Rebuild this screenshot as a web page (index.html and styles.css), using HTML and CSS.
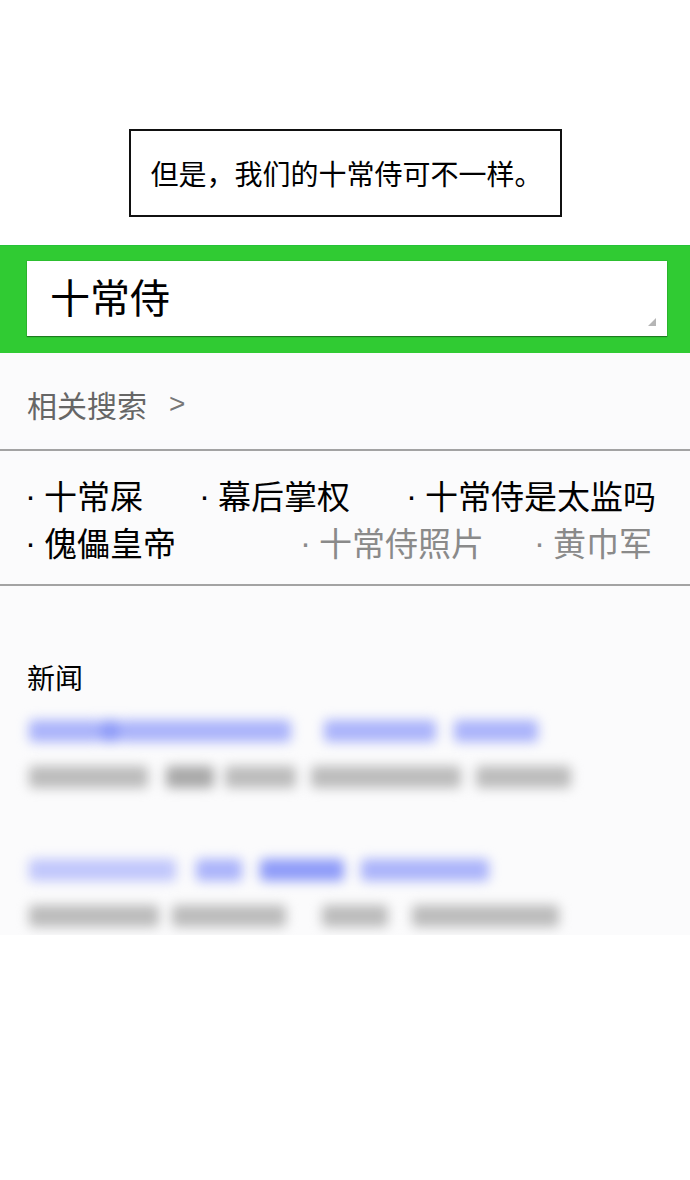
FILE: index.html
```html
<!DOCTYPE html>
<html lang="zh-CN">
<head>
<meta charset="utf-8">
<title>十常侍</title>
<link rel="stylesheet" href="styles.css">
</head>
<body>
<div class="page">
  <header class="top">
    <div class="caption">但是，我们的十常侍可不一样。</div>
  </header>

  <section class="search-bar">
    <div class="search-input">
      <span class="query">十常侍</span>
      <svg class="resize" width="8" height="8" viewBox="0 0 8 8"><path d="M8 0 L8 8 L0 8 Z" fill="#b5b5b5"/></svg>
    </div>
  </section>

  <main class="results">
    <div class="related-head">相关搜索<span class="chevron">&gt;</span></div>

    <div class="related-links">
      <div class="link-row row-one">
        <span class="link"><span class="dot">·</span>十常屎</span>
        <span class="link"><span class="dot">·</span>幕后掌权</span>
        <span class="link"><span class="dot">·</span>十常侍是太监吗</span>
      </div>
      <div class="link-row row-two">
        <span class="link first-wide"><span class="dot">·</span>傀儡皇帝</span>
        <span class="link visited"><span class="dot">·</span>十常侍照片</span>
        <span class="link visited"><span class="dot">·</span>黄巾军</span>
      </div>
    </div>

    <div class="news">
      <div class="news-title">新闻</div>
      <div class="blur-line blue first">
        <span class="seg" style="width:72px"></span><span class="seg dark" style="width:18px"></span><span class="seg" style="width:172px"></span><span class="seg" style="width:112px;margin-left:33px"></span><span class="seg" style="width:84px;margin-left:18px"></span>
      </div>
      <div class="blur-line gray">
        <span class="seg" style="width:119px"></span><span class="seg dark" style="width:48px;margin-left:18px"></span><span class="seg" style="width:71px;margin-left:11px"></span><span class="seg" style="width:150px;margin-left:15px"></span><span class="seg" style="width:95px;margin-left:15px"></span>
      </div>
      <div class="blur-line blue second">
        <span class="seg light" style="width:147px"></span><span class="seg" style="width:46px;margin-left:20px"></span><span class="seg dark" style="width:84px;margin-left:18px"></span><span class="seg" style="width:128px;margin-left:17px"></span>
      </div>
      <div class="blur-line gray">
        <span class="seg" style="width:130px"></span><span class="seg" style="width:114px;margin-left:13px"></span><span class="seg" style="width:66px;margin-left:36px"></span><span class="seg" style="width:147px;margin-left:24px"></span>
      </div>
    </div>
  </main>
</div>
</body>
</html>
```

FILE: styles.css
```css
html, body {
  margin: 0;
  padding: 0;
  background: #ffffff;
}

body {
  font-family: "Noto Sans CJK SC", "Noto Sans", sans-serif;
  color: #111;
}

.page {
  width: 690px;
}

.top {
  height: 245px;
  box-sizing: border-box;
  padding-top: 129px;
  display: flex;
  justify-content: center;
  background: #fff;
}

.caption {
  width: 433px;
  height: 88px;
  box-sizing: border-box;
  border: 2px solid #111;
  display: flex;
  align-items: center;
  justify-content: center;
  font-size: 28px;
  line-height: 1;
  color: #000;
  padding-left: 3px;
}

.search-bar {
  background: #30cb33;
  border-top: 1px solid #26c238;
  padding: 15px 23px 17px 27px;
}

.search-input {
  position: relative;
  height: 75px;
  background: #fff;
  box-shadow: 0 1px 1px rgba(0, 0, 0, 0.35), 0 0 0 1px rgba(0, 0, 0, 0.06);
  display: flex;
  align-items: center;
  padding-left: 23px;
  padding-bottom: 6px;
  box-sizing: border-box;
}

.query {
  font-size: 40px;
  line-height: 1;
  color: #000;
}

.resize {
  position: absolute;
  right: 11px;
  bottom: 10px;
}

.results {
  background: #fbfbfc;
  height: 582px;
}

.related-head {
  height: 98px;
  box-sizing: border-box;
  border-bottom: 2px solid #a3a3a3;
  display: flex;
  align-items: center;
  padding-left: 27px;
  padding-top: 5px;
  font-size: 30px;
  color: #666;
}

.chevron {
  font-family: "Liberation Sans", sans-serif;
  font-size: 28px;
  margin-left: 22px;
  color: #777;
}

.related-links {
  box-sizing: border-box;
  height: 135px;
  border-bottom: 2px solid #a3a3a3;
  padding: 21px 0 0 25px;
}

.link-row {
  display: flex;
  font-size: 33px;
  line-height: 47px;
  height: 47px;
  color: #000;
}

.row-one {
  gap: 56px;
}

.row-two {
  gap: 50px;
}

.first-wide {
  margin-right: 74px;
}

.link {
  display: flex;
  white-space: nowrap;
}

.dot {
  font-family: "Liberation Sans", sans-serif;
  width: 19px;
  display: inline-block;
  flex: none;
}

.visited {
  color: #8a8a8a;
}

.news {
  padding: 71px 0 0 27px;
}

.news-title {
  font-size: 28px;
  line-height: 40px;
  color: #000;
}

.blur-line {
  display: flex;
  height: 22px;
  filter: blur(6px);
  margin-left: 2px;
}

.blur-line .seg {
  display: block;
  height: 100%;
  border-radius: 4px;
}

.blur-line.blue .seg {
  background: #aab3fa;
}

.blur-line.blue .seg.light {
  background: #c0c6fb;
}

.blur-line.blue .seg.dark {
  background: #8e9bf8;
}

.blur-line.gray .seg {
  background: #bbbbbb;
}

.blur-line.gray .seg.dark {
  background: #a8a8a8;
}

.blur-line.first {
  margin-top: 23px;
}

.blur-line.gray {
  margin-top: 24px;
}

.blur-line.second {
  margin-top: 71px;
}
```
